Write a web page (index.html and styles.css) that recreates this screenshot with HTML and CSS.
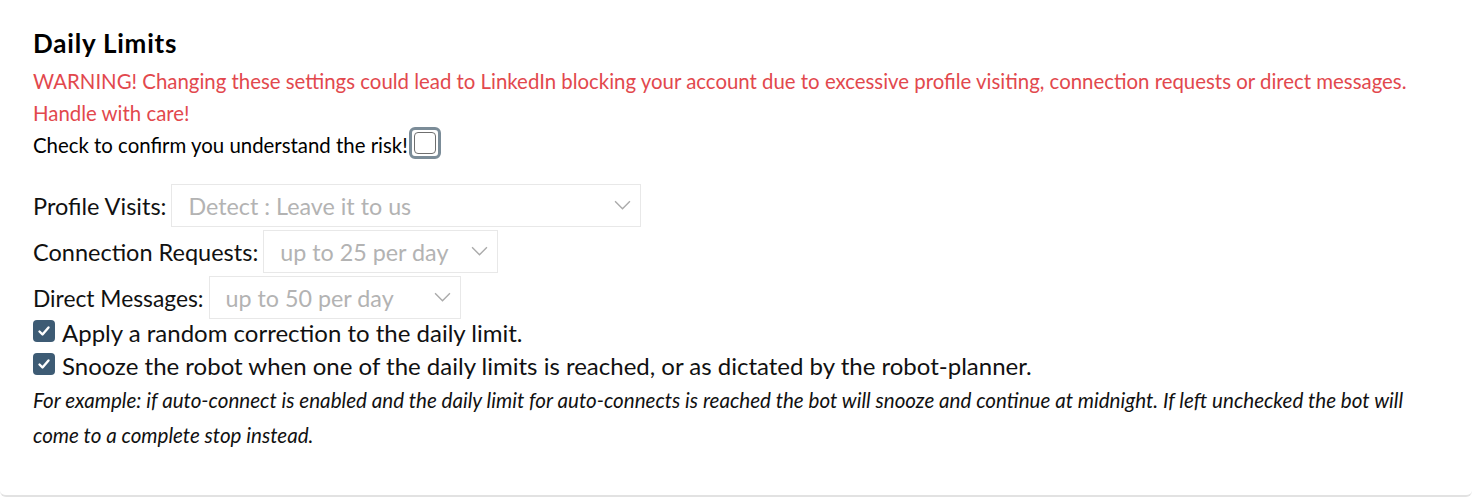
FILE: index.html
```html
<!DOCTYPE html>
<html lang="en">
<head>
  <meta charset="UTF-8">
  <title>Daily Limits</title>
  <link rel="stylesheet" href="styles.css">
</head>
<body>
  <div class="card">
    <h3 class="title">Daily Limits</h3>
    <p class="warning">WARNING! Changing these settings could lead to LinkedIn blocking your account due to excessive profile visiting, connection requests or direct messages. Handle with care!</p>
    <label class="confirm">Check to confirm you understand the risk!<span class="risk-box"><span class="risk-inner"></span></span></label>

    <div class="limits">
      <div class="limit-row">
        <span class="limit-label">Profile Visits:</span>
        <div class="select select-wide">
          <span>Detect : Leave it to us</span>
          <svg class="chevron" viewBox="0 0 16 10"><path d="M1 1l7 7 7-7" /></svg>
        </div>
      </div>
      <div class="limit-row">
        <span class="limit-label">Connection Requests:</span>
        <div class="select select-mid">
          <span>up to 25 per day</span>
          <svg class="chevron" viewBox="0 0 16 10"><path d="M1 1l7 7 7-7" /></svg>
        </div>
      </div>
      <div class="limit-row">
        <span class="limit-label">Direct Messages:</span>
        <div class="select select-mid">
          <span>up to 50 per day</span>
          <svg class="chevron" viewBox="0 0 16 10"><path d="M1 1l7 7 7-7" /></svg>
        </div>
      </div>
    </div>

    <div class="options">
      <label class="option">
        <span class="check"><svg viewBox="0 0 16 16"><path d="M3.5 8.5l3 3 6-7" /></svg></span>
        Apply a random correction to the daily limit.
      </label>
      <label class="option">
        <span class="check"><svg viewBox="0 0 16 16"><path d="M3.5 8.5l3 3 6-7" /></svg></span>
        Snooze the robot when one of the daily limits is reached, or as dictated by the robot-planner.
      </label>
    </div>
    <p class="note">For example: if auto-connect is enabled and the daily limit for auto-connects is reached the bot will snooze and continue at midnight. If left unchecked the bot will come to a complete stop instead.</p>
  </div>
</body>
</html>
```

FILE: styles.css
```css
* {
  box-sizing: border-box;
}

body {
  margin: 0;
  font-family: Lato, "Noto Sans", sans-serif;
  background: #fff;
  color: #111;
}

.card {
  height: 497px;
  padding: 27px 40px 0 33px;
  border-bottom: 2px solid #e2e2e2;
  border-radius: 0 0 6px 6px;
}

.title {
  margin: 0 0 6px;
  font-size: 26px;
  font-weight: 700;
  letter-spacing: 0.8px;
  line-height: 32px;
  color: #000;
}

.warning {
  margin: 0;
  font-size: 20.4px;
  line-height: 32px;
  color: #e2484d;
}

.confirm {
  display: flex;
  align-items: center;
  font-size: 20.4px;
  line-height: 32px;
  color: #000;
}

.risk-box {
  width: 32px;
  height: 32px;
  margin: -4px 0 0 1px;
  border: 3px solid #7b8c98;
  border-radius: 6px;
  display: flex;
  align-items: center;
  justify-content: center;
}

.risk-inner {
  width: 22px;
  height: 22px;
  border: 1.5px solid #6f6f6f;
  border-radius: 4px;
  background: #fff;
}

.limits {
  margin-top: 23px;
  display: flex;
  flex-direction: column;
  gap: 3px;
}

.limit-row {
  display: flex;
  align-items: center;
  gap: 5px;
}

.limit-label {
  font-size: 23.5px;
  color: #111;
}

.select {
  height: 43px;
  display: flex;
  align-items: center;
  justify-content: space-between;
  padding: 0 9px 0 16px;
  border: 1px solid #e8e8e8;
  font-size: 23.3px;
  color: #b3b3b3;
}

.select-wide {
  width: 470px;
}

.select-mid {
  width: 235px;
}

.limit-row:last-child .select {
  width: 252px;
}

.limit-row:last-child .limit-label {
  font-size: 22.8px;
}

.chevron {
  width: 17px;
  height: 11px;
  fill: none;
  stroke: #aaa;
  stroke-width: 1.3;
}

.options {
  margin-top: -3px;
}

.option {
  display: flex;
  align-items: center;
  gap: 7px;
  font-size: 24px;
  line-height: 33px;
  color: #111;
}

.check {
  width: 22px;
  height: 22px;
  border-radius: 4px;
  background: #3d5b74;
  display: flex;
  align-items: center;
  justify-content: center;
  margin-top: -4px;
}

.check svg {
  width: 16px;
  height: 16px;
  fill: none;
  stroke: #fff;
  stroke-width: 2.4;
  stroke-linecap: round;
  stroke-linejoin: round;
}

.note {
  margin: 1px 0 0;
  font-size: 20.6px;
  font-style: italic;
  line-height: 35px;
  color: #111;
}
```
